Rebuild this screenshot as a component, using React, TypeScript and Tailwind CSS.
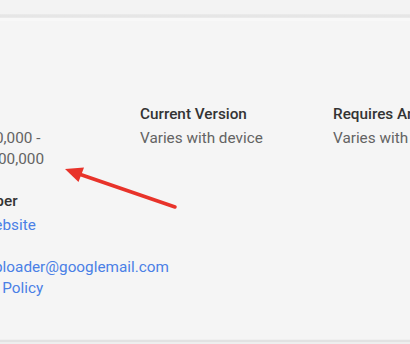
import React from "react";

function Field({
  title,
  children,
}: {
  title: string;
  children: React.ReactNode;
}) {
  return (
    <div className="flex flex-col">
      <div className="text-[15.3px] leading-[21px] font-medium text-[#333333] mb-[3px] whitespace-nowrap">
        {title}
      </div>
      <div className="text-[15.3px] leading-[21px] text-[#636363] whitespace-nowrap">{children}</div>
    </div>
  );
}

export default function App() {
  return (
    <div
      className="relative w-[410px] h-[344px] overflow-hidden bg-[#f5f5f5] flex flex-col"
      style={{ fontFamily: "Roboto, 'Noto Sans', Arial, sans-serif" }}
    >
      {/* top edge */}
      <div className="h-[14px] bg-[#f3f3f3]" />
      <div className="h-[4px] bg-gradient-to-b from-[#ebebeb] via-[#e4e4e4] to-[#ececec]" />
      <div className="h-[3px] bg-[#f8f8f8]" />

      {/* content */}
      <div className="flex-1 flex flex-col pt-[83px] ml-[-51px]">
        <div className="flex">
          <div className="w-[191px] shrink-0">
            <Field title="Installs">
              500,000,000 -<br />1,000,000,000
            </Field>
          </div>
          <div className="w-[193px] shrink-0">
            <Field title="Current Version">Varies with device</Field>
          </div>
          <div className="w-[193px] shrink-0">
            <Field title="Requires Android">Varies with device</Field>
          </div>
        </div>

        <div className="flex mt-[21px]">
          <div className="w-[150px] shrink-0">
            <div className="text-[15.3px] leading-[21px] font-medium text-[#333333] mb-[3px]">
              Developer
            </div>
            <div className="flex flex-col text-[15.3px] leading-[21px] text-[#4a80e6]">
              <span>Visit website</span>
              <span>Email videouploader@googlemail.com</span>
              <span className="whitespace-nowrap">Privacy Policy</span>
            </div>
          </div>
        </div>
      </div>

      {/* bottom edge */}
      <div className="h-[1px] bg-[#f0f0f0]" />
      <div className="h-[2px] bg-[#e2e2e2]" />
      <div className="h-[2px] bg-[#eeeeee]" />

      {/* annotation arrow */}
      <svg
        className="absolute left-0 top-0 pointer-events-none"
        width="410"
        height="344"
        viewBox="0 0 410 344"
      >
        <line
          x1="175"
          y1="207"
          x2="79"
          y2="174"
          stroke="#e8332a"
          strokeWidth="3.5"
          strokeLinecap="round"
        />
        <polygon points="65,169 84,167.5 78.5,182" fill="#e8332a" />
      </svg>
    </div>
  );
}
